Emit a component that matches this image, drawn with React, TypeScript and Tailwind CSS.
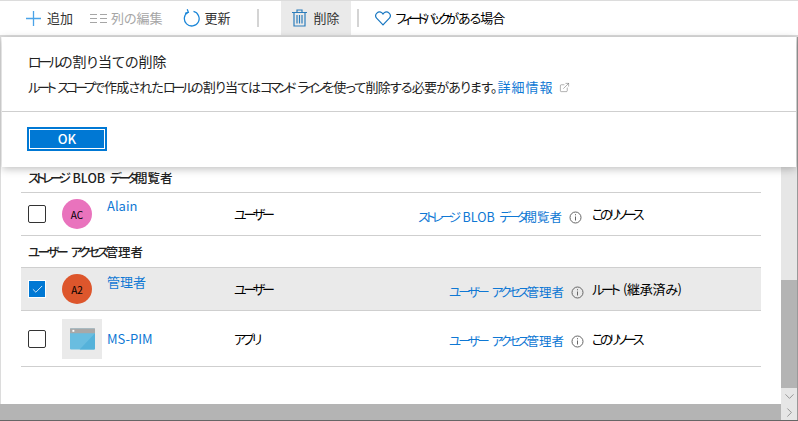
import type { ReactNode } from 'react';
import { Check, ChevronDown, ChevronRight, ExternalLink } from 'lucide-react';

const font = "font-['Noto_Sans_CJK_JP','Noto_Sans',sans-serif] [font-feature-settings:'palt']";

// katakana sits much tighter than kanji in the screenshot, so split the text into runs
function Tx({ text, kana = 'tracking-[-3.2px]' }: { text: string; kana?: string }) {
    return (
        <>
            {text.split(/([\u30A0-\u30FF]+)/).map((part, index) =>
                index % 2 === 1 ? <span key={index} className={kana}>{part}</span> : <span key={index}>{part}</span>
            )}
        </>
    );
}

function PlusIcon() {
    return (
        <svg width="15" height="15" viewBox="0 0 15 15" fill="none" stroke="#4aa3e8" strokeWidth="1.3">
            <path d="M7.5 0V15M0 7.5H15" />
        </svg>
    );
}

function ColumnsIcon() {
    return (
        <svg width="17" height="9" viewBox="0 0 17 9" fill="none" stroke="#a6a6a6" strokeWidth="1">
            <path d="M0 .5H7M0 4.5H7M0 8.5H7M10 .5H17M10 4.5H17M10 8.5H17" />
        </svg>
    );
}

function RefreshIcon() {
    return (
        <svg width="17" height="18" viewBox="0 0 17 18" fill="none" stroke="#1a86d8" strokeWidth="1.25">
            <path d="M5 3.2A7.4 7.4 0 1 0 10.5 2.4" />
            <path d="M4.2 .2L5.4 3.4L2 4.4" />
        </svg>
    );
}

function TrashIcon() {
    return (
        <svg width="15" height="18" viewBox="0 0 15 18" fill="none" stroke="#2b7cbb" strokeWidth="1.2">
            <path d="M0 3.5H15M5 3.5V1H10V3.5M2 3.5V17H13V3.5" />
            <path d="M5 6V14.5M7.5 6V14.5M10 6V14.5" />
        </svg>
    );
}

function HeartIcon() {
    return (
        <svg width="16" height="15" viewBox="0 0 16 15" fill="none" stroke="#1a78c2" strokeWidth="1.2">
            <path d="M8 13.8L1.6 7.2A3.8 3.8 0 0 1 7 1.9L8 3L9 1.9A3.8 3.8 0 0 1 14.4 7.2Z" />
        </svg>
    );
}

function InfoIcon() {
    return (
        <svg width="13" height="13" viewBox="0 0 13 13" fill="none" stroke="#666" strokeWidth="1">
            <circle cx="6.5" cy="6.5" r="5.5" />
            <path d="M6.5 5.5V9.5M6.5 3.2V4.3" />
        </svg>
    );
}

function Divider() {
    return <div className="h-[18px] w-[2px] bg-[#d4d4d4]" />;
}

function ToolLabel({ icon, children, muted, gap }: { icon: ReactNode; children: ReactNode; muted?: boolean; gap: string }) {
    return (
        <div className={`flex items-center text-[13px] ${gap} ${muted ? 'text-[#a6a6a6]' : 'text-[#333]'}`}>
            {icon}
            <span>{children}</span>
        </div>
    );
}

function Row({ avatar, name, type, role, roleKana, scope, selected, h, namePad, iconPad }: { avatar: ReactNode; name: string; type: string; role: string; roleKana: string; scope: ReactNode; selected?: boolean; h: string; namePad: string; iconPad: string }) {
    return (
        <div className={`flex items-center border-b border-[#cfcfcf] ${h} ${selected ? 'bg-[#eaeaea]' : ''}`}>
            <div className="flex w-[41px] pl-[7px]">
                {selected ? (
                    <div className="flex h-[18px] w-[18px] items-center justify-center border border-white bg-[#0078d4]">
                        <Check size={13} strokeWidth={1.5} className="text-white" />
                    </div>
                ) : (
                    <div className="h-[18px] w-[18px] rounded-[2px] border border-[#333]" />
                )}
            </div>
            <div className="flex w-[45px] items-center">{avatar}</div>
            <div className={`w-[127px] text-[13px] text-[#0f78d4] ${namePad}`}>{name}</div>
            <div className="w-[150px] text-[13px] text-black"><Tx text={type} /></div>
            <div className={`flex w-[208px] items-center justify-end gap-[7px] pt-[6px] text-[12.5px] text-[#0f78d4] [word-spacing:2px] ${iconPad}`}>
                <span><Tx text={role} kana={roleKana} /></span>
                <InfoIcon />
            </div>
            <div className="text-[13px] text-black">{scope}</div>
        </div>
    );
}

function Avatar({ text, color }: { text: string; color: string }) {
    return <div className={`flex h-[30px] w-[30px] items-center justify-center rounded-full text-[10px] text-black ${color}`}>{text}</div>;
}

const thisResource = <span className="tracking-[-3.3px]">このリソース</span>;

export default function App() {
    return (
        <div className={`relative flex h-[421px] w-[798px] flex-col overflow-hidden bg-white ${font}`}>
            <div className="flex h-[37px] shrink-0 items-center border-t border-b-[2px] border-[#dcdcdc] pl-[26px]">
                <ToolLabel gap="gap-[6px]" icon={<PlusIcon />}>追加</ToolLabel>
                <div className="ml-[17px]"><ToolLabel muted gap="gap-[4px]" icon={<ColumnsIcon />}>列の編集</ToolLabel></div>
                <div className="ml-[20px]"><ToolLabel gap="gap-[5px]" icon={<RefreshIcon />}>更新</ToolLabel></div>
                <div className="ml-[26px]"><Divider /></div>
                <div className="ml-[22px] flex h-[34px] w-[70px] items-center justify-center bg-[#eaeaea]">
                    <ToolLabel gap="gap-[7px]" icon={<TrashIcon />}>削除</ToolLabel>
                </div>
                <div className="ml-[6px]"><Divider /></div>
                <div className="ml-[16px]">
                    <ToolLabel gap="gap-[5px]" icon={<HeartIcon />}>
                        <span className="text-black"><Tx text="フィードバック" kana="tracking-[-3.9px]" /><span className="tracking-[-1px]">がある場合</span></span>
                    </ToolLabel>
                </div>
            </div>

            <div className="flex min-h-0 flex-1">
                <div className="flex-1 border-l border-[#dcdcdc] pt-[130px] pr-[20px] pl-[20px]">
                    <div className="flex h-[26px] items-center border-b border-[#cfcfcf] pb-[3px] pl-[7px] text-[12.5px] font-medium text-[#222] [word-spacing:2px]">
                        <span><Tx text="ストレージ BLOB データ閲覧者" kana="tracking-[-3.3px]" /></span>
                    </div>
                    <Row h="h-[43px]" namePad="pb-[16px]" iconPad="pr-[10px]" avatar={<Avatar text="AC" color="bg-[#e973bd]" />} name="Alain" type="ユーザー" role="ストレージ BLOB データ閲覧者" roleKana="tracking-[-3.3px]" scope={thisResource} />
                    <div className="flex h-[32px] items-center border-b border-[#cfcfcf] pt-[2px] pl-[7px] text-[12.5px] font-medium text-[#222] [word-spacing:2px]">
                        <span><Tx text="ユーザー アクセス管理者" kana="tracking-[-2.65px]" /></span>
                    </div>
                    <Row selected h="h-[43px]" namePad="pb-[15px]" iconPad="pr-[8px]" avatar={<Avatar text="A2" color="bg-[#dd562c]" />} name="管理者" type="ユーザー" role="ユーザー アクセス管理者" roleKana="tracking-[-2.65px]" scope={<span className="tracking-[-0.3px] [word-spacing:3px]"><Tx text="ルート (継承済み)" /></span>} />
                    <Row h="h-[56px]" namePad="" iconPad="pr-[8px]" avatar={
                        <div className="flex h-[40px] w-[40px] items-center justify-center bg-[#eaeaea]">
                            <svg width="25" height="22" viewBox="0 0 26 22">
                                <rect width="26" height="22" rx="1" fill="#69bde0" />
                                <path d="M26 5V21a1 1 0 0 1-1 1H10z" fill="#55b2da" />
                                <rect width="26" height="5" fill="#a8a8a8" />
                                <rect x="2.5" y="1.5" width="2" height="2" fill="#fff" />
                            </svg>
                        </div>
                    } name="MS-PIM" type="アプリ" role="ユーザー アクセス管理者" roleKana="tracking-[-2.65px]" scope={thisResource} />
                </div>
                <div className="flex w-[17px] shrink-0 flex-col border-r border-[#999] bg-[#e6e6e6]">
                    <div className="h-[243px] shrink-0" />
                    <div className="h-[108px] shrink-0 bg-[#b4b4b4]" />
                    <div className="flex flex-1 items-center justify-center bg-[#e6e6e6]">
                        <ChevronDown size={15} strokeWidth={1} className="text-[#666]" />
                    </div>
                </div>
            </div>

            <div className="flex h-[17px] shrink-0 border-b border-[#666] bg-[#b4b4b4]">
                <div className="flex-1" />
                <div className="flex w-[17px] items-center justify-center border-r border-[#999] bg-[#e6e6e6]">
                    <ChevronRight size={15} strokeWidth={1} className="text-[#666]" />
                </div>
            </div>

            <div className="absolute top-[37px] right-[2px] left-[2px] h-[130px] bg-white shadow-[0_2px_8px_rgba(0,0,0,0.25)]">
                <div className="h-[75px] border-b border-[#cfcfcf] pt-[13px] pl-[26px]">
                    <div className="text-[14px] leading-[22px] text-[#222]"><Tx text="ロールの割り当ての削除" /></div>
                    <div className="mt-[6px] flex items-center text-[13px] leading-[18px] text-[#222]">
                        <span className="tracking-[-0.8px] [word-spacing:2px]"><Tx text="ルート スコープで作成されたロールの割り当てはコマンド ラインを使って削除する必要があります。" /></span>
                        <span className="ml-[1px] tracking-[1px] text-[#0f78d4]">詳細情報</span>
                        <ExternalLink size={11} strokeWidth={1} className="ml-[5px] text-[#555]" />
                    </div>
                </div>
                <div className="pt-[15px] pl-[25px]">
                    <div className="flex h-[24px] w-[80px] items-center justify-center border-[2px] border-[#0078d4] bg-[#0078d4] text-[13px] font-medium text-white outline-1 -outline-offset-3 outline-white">OK</div>
                </div>
            </div>
        </div>
    );
}
